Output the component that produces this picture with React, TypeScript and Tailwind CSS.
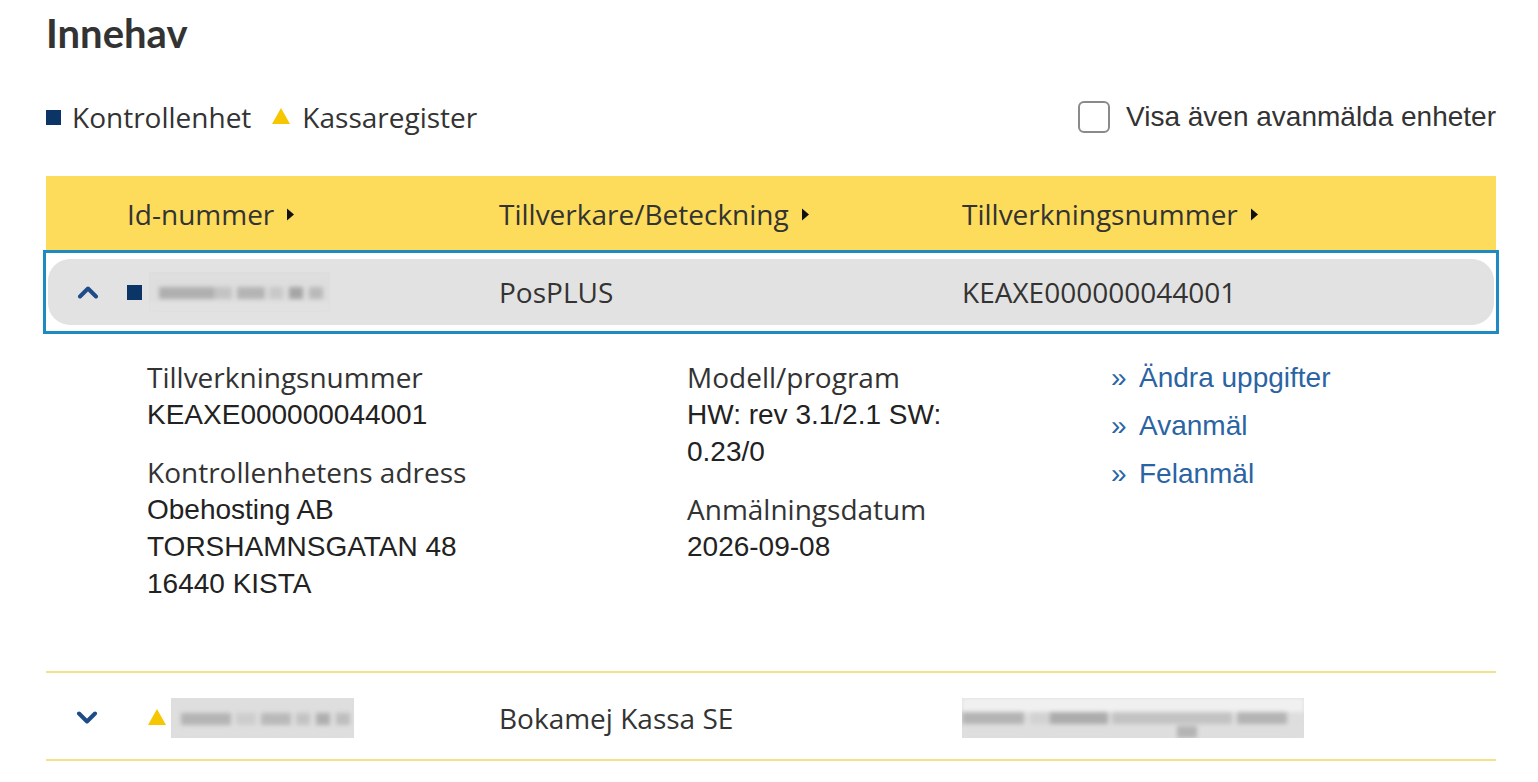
import React from "react";

const openSans = "font-['Open_Sans',sans-serif]";
const arial = "font-['Liberation_Sans',Arial,sans-serif]";

const SortArrow = () => (
  <svg width="9" height="13" viewBox="0 0 9 13" className="ml-[12px] inline-block">
    <path d="M1 0.5 L8 6.5 L1 12.5 Z" fill="#111" />
  </svg>
);

const Chevron = ({ up }: { up?: boolean }) => (
  <svg width="22" height="14" viewBox="0 0 22 14">
    <path
      d={up ? "M3 11.5 L11 3.5 L19 11.5" : "M3 2.5 L11 10.5 L19 2.5"}
      fill="none"
      stroke="#1d4c88"
      strokeWidth="4"
      strokeLinecap="round"
      strokeLinejoin="round"
    />
  </svg>
);

const Square = () => <span className="inline-block w-[15px] h-[15px] bg-[#0a3566]" />;

const Triangle = () => (
  <svg width="18" height="16" viewBox="0 0 18 16">
    <path d="M9 0 L18 16 L0 16 Z" fill="#f6c700" />
  </svg>
);

// pixelated, blurred placeholder for hidden values
const Blurred = ({ w, strips }: { w: number; strips: number[][] }) => (
  <div className="relative h-[40px] overflow-hidden bg-[#dedede]" style={{ width: w }}>
    <div className="absolute inset-0 blur-[2px]">
      {strips.map(([x, y, sw, c, h], i) => (
        <div
          key={i}
          className="absolute"
          style={{ left: x, top: y, width: sw, height: h ?? 12, background: `rgb(${c},${c},${c})` }}
        />
      ))}
    </div>
  </div>
);

const DetailGroup = ({ label, lines }: { label: string; lines: string[] }) => (
  <div className="leading-[37px]">
    <div className={`${openSans} text-[28px] text-[#333]`}>{label}</div>
    {lines.map((l) => (
      <div key={l} className={`${arial} text-[28px] text-[#222]`}>
        {l}
      </div>
    ))}
  </div>
);

const LinkItem = ({ text }: { text: string }) => (
  <a className={`${arial} flex items-center text-[28px] text-[#2b64a3] leading-[37px]`}>
    <span className="w-[26px] text-[28px] -ml-[2px] mr-[2px]">»</span>
    {text}
  </a>
);

export default function App() {
  return (
    <div className="min-h-screen bg-white pl-[46px] pr-[42px] pt-[7px] text-[#333]">
      <h1 className={`font-['Lato',sans-serif] font-bold text-[40px] leading-[52px] text-[#333]`}>Innehav</h1>

      <div className="flex items-center justify-between mt-[34px] h-[48px]">
        <div className={`${openSans} flex items-center text-[28px] text-[#333]`}>
          <Square />
          <span className="ml-[11px]">Kontrollenhet</span>
          <span className="ml-[21px] mb-[2px]">
            <Triangle />
          </span>
          <span className="ml-[12px]">Kassaregister</span>
        </div>
        <label className={`${arial} flex items-center text-[28px] text-[#333]`}>
          <span className="w-[32px] h-[32px] rounded-[6px] border-2 border-[#8a8a8a] bg-white" />
          <span className="ml-[16px]">Visa även avanmälda enheter</span>
        </label>
      </div>

      {/* table header */}
      <div className={`${openSans} mt-[35px] flex items-center h-[76px] bg-[#fddc5b] text-[28px] text-[#333]`}>
        <div className="w-[81px]" />
        <div className="w-[372px] flex items-center">
          Id-nummer <SortArrow />
        </div>
        <div className="w-[463px] flex items-center">
          Tillverkare/Beteckning <SortArrow />
        </div>
        <div className="flex-1 flex items-center">
          Tillverkningsnummer <SortArrow />
        </div>
      </div>

      {/* expanded row */}
      <div className="-mx-[3px] -mt-[2px] border-[3px] border-[#1f8ac2] px-[2px] py-[6px]">
        <div className={`${openSans} flex items-center h-[66px] rounded-[22px] bg-[#e2e2e2] text-[28px] text-[#333]`}>
          <div className="w-[79px] flex justify-center pl-[1px]">
            <Chevron up />
          </div>
          <div className="w-[372px] flex items-center">
            <Square />
            <span className="ml-[7px]">
              <Blurred
                w={181}
                strips={[
                  [10, 15, 55, 175],
                  [65, 15, 18, 195],
                  [88, 15, 28, 180],
                  [120, 15, 14, 200],
                  [140, 15, 14, 165],
                  [160, 15, 14, 185],
                  [0, 0, 181, 222, 9],
                  [0, 30, 181, 225, 10],
                ]}
              />
            </span>
          </div>
          <div className="w-[463px]">PosPLUS</div>
          <div className="flex-1">KEAXE000000044001</div>
        </div>
      </div>

      {/* details */}
      <div className="flex pl-[101px] pt-[25px] h-[337px]">
        <div className="w-[540px] flex flex-col gap-[21px]">
          <DetailGroup label="Tillverkningsnummer" lines={["KEAXE000000044001"]} />
          <DetailGroup
            label="Kontrollenhetens adress"
            lines={["Obehosting AB", "TORSHAMNSGATAN 48", "16440 KISTA"]}
          />
        </div>
        <div className="w-[426px] flex flex-col gap-[21px]">
          <div className="w-[270px]">
            <DetailGroup label="Modell/program" lines={["HW: rev 3.1/2.1 SW: 0.23/0"]} />
          </div>
          <DetailGroup label="Anmälningsdatum" lines={["2026-09-08"]} />
        </div>
        <div className="flex flex-col gap-[11px]">
          <LinkItem text="Ändra uppgifter" />
          <LinkItem text="Avanmäl" />
          <LinkItem text="Felanmäl" />
        </div>
      </div>

      {/* collapsed row */}
      <div className={`${openSans} flex items-center h-[90px] border-y-2 border-[#f4e28a] text-[28px] text-[#333]`}>
        <div className="w-[81px] flex justify-center pt-[4px]">
          <Chevron />
        </div>
        <div className="w-[372px] flex items-center pl-[21px] pt-[4px]">
          <span className="mb-[2px]">
            <Triangle />
          </span>
          <span className="ml-[5px]">
            <Blurred
              w={183}
              strips={[
                [10, 15, 50, 180],
                [65, 15, 20, 205],
                [90, 15, 30, 185],
                [125, 15, 14, 195],
                [145, 15, 14, 175],
                [165, 15, 14, 190],
                [0, 30, 183, 222, 10],
              ]}
            />
          </span>
        </div>
        <div className="w-[463px] pt-[4px]">Bokamej Kassa SE</div>
        <div className="flex-1 pt-[4px]">
          <Blurred
            w={342}
            strips={[
              [0, 0, 342, 240, 14],
              [0, 14, 62, 180],
              [68, 14, 20, 210],
              [88, 14, 58, 172],
              [150, 14, 120, 195],
              [275, 14, 50, 180],
              [0, 26, 342, 222, 14],
              [215, 28, 20, 180],
            ]}
          />
        </div>
      </div>
    </div>
  );
}
